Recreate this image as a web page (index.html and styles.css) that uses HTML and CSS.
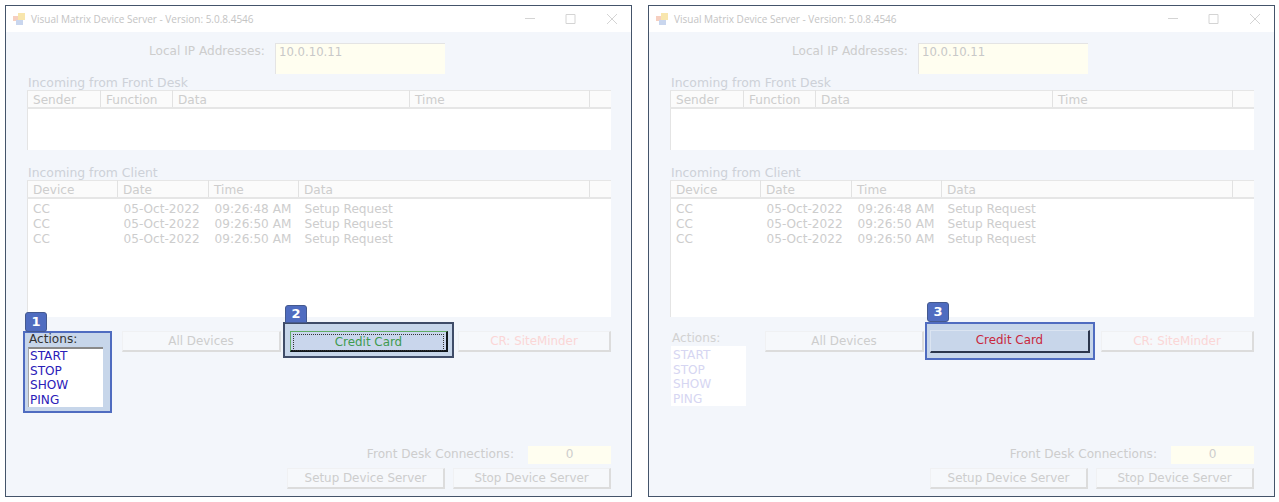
FILE: index.html
```html
<!DOCTYPE html>
<html lang="en">
<head>
    <meta charset="UTF-8">
    <meta name="viewport" content="width=device-width, initial-scale=1.0">
    <title>Visual Matrix Device Server</title>
    <link rel="stylesheet" href="styles.css">
</head>

<body>
    <!-- Window 1: Actions list and the focused Credit Card button -->
    <div class="window">
        <div class="title-bar">
            <svg class="app-icon" width="12" height="12" viewBox="0 0 12 12">
                <rect x="0" y="3" width="5" height="5" fill="#f6cfc0"/>
                <rect x="5" y="0" width="7" height="7" fill="#f8e6ad"/>
                <rect x="3" y="7" width="7" height="5" fill="#c9d6ee"/>
            </svg>
            <span class="title-text">Visual Matrix Device Server - Version: 5.0.8.4546</span>
            <svg class="controls" width="92" height="10" viewBox="0 0 92 10">
                <path d="M0 4.5H10M41 .5H50V9.5H41ZM82 0L92 10M92 0L82 10" fill="none" stroke="#d4d4d4"/>
            </svg>
        </div>
        <div class="main">
            <div class="ip-row">
                <span class="ip-label">Local IP Addresses:</span>
                <div class="ip-box">10.0.10.11</div>
            </div>

            <div class="section-label">Incoming from Front Desk</div>
            <table class="grid grid-desk">
                <colgroup><col class="c73"><col class="c72"><col class="c237"><col class="c180"><col></colgroup>
                <thead><tr><th>Sender</th><th>Function</th><th>Data</th><th>Time</th><th></th></tr></thead>
                <tbody><tr><td colspan="5"></td></tr></tbody>
            </table>

            <div class="section-label section-client">Incoming from Client</div>
            <table class="grid grid-client">
                <colgroup><col class="c90"><col class="c91"><col class="c90"><col class="c291"><col></colgroup>
                <thead><tr><th>Device</th><th>Date</th><th>Time</th><th>Data</th><th></th></tr></thead>
                <tbody>
                    <tr><td>CC</td><td>05-Oct-2022</td><td>09:26:48 AM</td><td>Setup Request</td><td></td></tr>
                    <tr><td>CC</td><td>05-Oct-2022</td><td>09:26:50 AM</td><td>Setup Request</td><td></td></tr>
                    <tr><td>CC</td><td>05-Oct-2022</td><td>09:26:50 AM</td><td>Setup Request</td><td></td></tr>
                    <tr class="filler"><td colspan="5"></td></tr>
                </tbody>
            </table>

            <div class="action-row">
                <div class="actions actions-marked">
                    <span class="mark mark-actions"></span>
                    <span class="badge badge-actions">1</span>
                    <div class="actions-label">Actions:</div>
                    <ul class="actions-list">
                        <li>START</li>
                        <li>STOP</li>
                        <li>SHOW</li>
                        <li>PING</li>
                    </ul>
                </div>
                <button class="btn btn-all">All Devices</button>
                <div class="slot">
                    <span class="mark mark-dark"></span>
                    <span class="badge badge-dark">2</span>
                    <button class="btn btn-credit btn-focus"><span class="focus-rect">Credit Card</span></button>
                </div>
                <button class="btn btn-cr">CR: SiteMinder</button>
            </div>

            <div class="conn-row">
                <span>Front Desk Connections:</span>
                <div class="conn-box">0</div>
            </div>
            <div class="server-row">
                <button class="btn btn-server">Setup Device Server</button>
                <button class="btn btn-server">Stop Device Server</button>
            </div>
        </div>
    </div>

    <!-- Window 2: Credit Card button after the click -->
    <div class="window">
        <div class="title-bar">
            <svg class="app-icon" width="12" height="12" viewBox="0 0 12 12">
                <rect x="0" y="3" width="5" height="5" fill="#f6cfc0"/>
                <rect x="5" y="0" width="7" height="7" fill="#f8e6ad"/>
                <rect x="3" y="7" width="7" height="5" fill="#c9d6ee"/>
            </svg>
            <span class="title-text">Visual Matrix Device Server - Version: 5.0.8.4546</span>
            <svg class="controls" width="92" height="10" viewBox="0 0 92 10">
                <path d="M0 4.5H10M41 .5H50V9.5H41ZM82 0L92 10M92 0L82 10" fill="none" stroke="#d4d4d4"/>
            </svg>
        </div>
        <div class="main">
            <div class="ip-row">
                <span class="ip-label">Local IP Addresses:</span>
                <div class="ip-box">10.0.10.11</div>
            </div>

            <div class="section-label">Incoming from Front Desk</div>
            <table class="grid grid-desk">
                <colgroup><col class="c73"><col class="c72"><col class="c237"><col class="c180"><col></colgroup>
                <thead><tr><th>Sender</th><th>Function</th><th>Data</th><th>Time</th><th></th></tr></thead>
                <tbody><tr><td colspan="5"></td></tr></tbody>
            </table>

            <div class="section-label section-client">Incoming from Client</div>
            <table class="grid grid-client">
                <colgroup><col class="c90"><col class="c91"><col class="c90"><col class="c291"><col></colgroup>
                <thead><tr><th>Device</th><th>Date</th><th>Time</th><th>Data</th><th></th></tr></thead>
                <tbody>
                    <tr><td>CC</td><td>05-Oct-2022</td><td>09:26:48 AM</td><td>Setup Request</td><td></td></tr>
                    <tr><td>CC</td><td>05-Oct-2022</td><td>09:26:50 AM</td><td>Setup Request</td><td></td></tr>
                    <tr><td>CC</td><td>05-Oct-2022</td><td>09:26:50 AM</td><td>Setup Request</td><td></td></tr>
                    <tr class="filler"><td colspan="5"></td></tr>
                </tbody>
            </table>

            <div class="action-row">
                <div class="actions">
                    <div class="actions-label">Actions:</div>
                    <ul class="actions-list">
                        <li>START</li>
                        <li>STOP</li>
                        <li>SHOW</li>
                        <li>PING</li>
                    </ul>
                </div>
                <button class="btn btn-all">All Devices</button>
                <div class="slot">
                    <span class="mark mark-blue"></span>
                    <span class="badge badge-blue">3</span>
                    <button class="btn btn-credit btn-pressed">Credit Card</button>
                </div>
                <button class="btn btn-cr">CR: SiteMinder</button>
            </div>

            <div class="conn-row">
                <span>Front Desk Connections:</span>
                <div class="conn-box">0</div>
            </div>
            <div class="server-row">
                <button class="btn btn-server">Setup Device Server</button>
                <button class="btn btn-server">Stop Device Server</button>
            </div>
        </div>
    </div>
</body>
</html>
```

FILE: styles.css
```css
/*
==========================
= Page: Two window shots =
==========================
*/
body {
    margin: 0;
    padding: 5px;
    display: flex;
    gap: 16px;
    background: #fff;
    font-family: "DejaVu Sans", sans-serif;
    font-size: 12.1px;
    color: #cdcdcd;
}

.window {
    width: 627px;
    height: 492px;
    box-sizing: border-box;
    border: 1px solid #44546a;
    background: #f3f6fb;
}

/*
=============
= Title Bar =
=============
*/
.title-bar {
    height: 26px;
    display: flex;
    align-items: center;
    background: #fff;
    padding-left: 7px;
}

.app-icon {
    margin-right: 6px;
}

.title-text {
    font-family: "Open Sans", sans-serif;
    font-size: 10px;
    color: #c4c4c4;
}

.controls {
    margin-left: auto;
    margin-right: 14px;
}

/*
======================
= Main: Window Body =
======================
*/
.main {
    padding: 11px 20px 0 21px;
}

.ip-row {
    display: flex;
    height: 31px;
    padding-left: 122px;
    line-height: 16px;
}

.ip-label {
    width: 116px;
    white-space: nowrap;
}

.ip-box {
    width: 170px;
    margin-left: 10px;
    padding-left: 3px;
    box-sizing: border-box;
    background: #fffef0;
    border-top: 1px solid #e4e4e4;
    border-left: 1px solid #e4e4e4;
    color: #c8c8c8;
    font-size: 11.7px;
}

.section-label {
    height: 16px;
    padding-left: 1px;
    line-height: 17px;
    font-size: 12.4px;
    color: #cdd1d8;
}

.section-client {
    margin-top: 16px;
    height: 14px;
    line-height: 14px;
}

/*
==================
= Grid: Listview =
==================
*/
.grid {
    width: 584px;
    table-layout: fixed;
    border-collapse: collapse;
    background: #fff;
    border-left: 1px solid #e4e4e4;
}

.c73 { width: 73px; }
.c72 { width: 72px; }
.c237 { width: 237px; }
.c180 { width: 180px; }
.c90 { width: 90px; }
.c91 { width: 91px; }
.c291 { width: 291px; }

.grid th {
    height: 13px;
    padding: 3px 0 0 5px;
    line-height: 13px;
    background: #fbfbfb;
    border-top: 1px solid #e6e6e6;
    border-bottom: 2px solid #e6e6e6;
    border-right: 1px solid #e2e2e2;
    text-align: left;
    font-weight: normal;
    color: #cdcdcd;
}

.grid th:last-child {
    border-right: none;
}

.grid td {
    padding: 0 0 0 6px;
    height: 15px;
    line-height: 15px;
    color: #cdcdcd;
    white-space: nowrap;
}

.grid-desk td {
    height: 41px;
}

.grid-client td:first-child {
    padding-left: 5px;
}

.grid-client tbody tr:first-child td {
    height: 15px;
    padding-top: 3px;
}

.grid-client .filler td {
    height: 70px;
}

/*
==================================
= Action-Row: List and Buttons =
==================================
*/
.action-row {
    display: flex;
    align-items: flex-start;
    height: 115px;
    margin-top: 14px;
    gap: 9px;
}

.actions {
    position: relative;
    width: 75px;
    margin: 1px 10px 0 1px;
}

.actions-label {
    position: relative;
    height: 14px;
    line-height: 13px;
    padding-left: 1px;
    color: #d2d2d2;
}

.actions-list {
    position: relative;
    margin: 0;
    padding: 2px 0 0 2px;
    height: 60px;
    box-sizing: border-box;
    list-style: none;
    background: #fff;
    color: #d6d6f2;
    line-height: 14.6px;
}

.actions-marked .actions-label {
    color: #333;
    line-height: 15px;
    height: 15px;
}

.actions-marked .actions-list {
    padding: 0 0 0 1px;
    border-top: 2px solid #8a8a8a;
    border-left: 1px solid #a8a8a8;
    color: #2a20b8;
}

.slot {
    position: relative;
    width: 158px;
    height: 21px;
}

.btn {
    position: relative;
    height: 21px;
    padding: 0;
    box-sizing: border-box;
    background: #f6f8fb;
    border: 1px solid #f0f1f3;
    border-right: 2px solid #dcdcdc;
    border-bottom: 2px solid #dcdcdc;
    font-family: "DejaVu Sans", sans-serif;
    font-size: 11.9px;
    color: #cdcdcd;
}

.btn-all {
    width: 159px;
}

.btn-cr {
    flex: 1;
    margin-left: 1px;
    color: #fbd6d6;
}

.btn-credit {
    width: 100%;
    height: 100%;
}

.btn-focus {
    padding: 1px;
    background: #c9d6ec;
    border: 1px solid #62ad68;
    border-right: 2px solid #10161c;
    border-bottom: 2px solid #10161c;
    color: #3f9a50;
}

.focus-rect {
    display: block;
    height: 15px;
    line-height: 14px;
    margin: 1px;
    border: 1px dotted #333;
}

.btn-pressed {
    width: 160px;
    height: 23px;
    margin: -1px 0 0 -3px;
    padding-bottom: 2px;
    background: #c8d6ea;
    border: 1px solid #dbe4f1;
    border-right: 2px solid #2b364c;
    border-bottom: 2px solid #2b364c;
    color: #c9283e;
}

/*
=============================
= Marks: Callouts over page =
=============================
*/
.mark {
    position: absolute;
    box-sizing: border-box;
    background: #c7d6ea;
    border: 2px solid #4f6cc0;
}

.mark-actions {
    inset: -1px -9px -6px -5px;
}

.mark-dark {
    inset: -9px -6px -6px -7px;
    border-color: #3f4c68;
}

.mark-blue {
    inset: -9px -4px -8px -8px;
}

.badge {
    position: absolute;
    width: 22px;
    height: 20px;
    box-sizing: border-box;
    background: #4f6cc0;
    border: 1px solid #44598f;
    border-radius: 3px;
    color: #fff;
    font-weight: bold;
    font-size: 13px;
    line-height: 18px;
    text-align: center;
}

.badge-actions {
    left: -3px;
    top: -20px;
}

.badge-dark {
    left: -5px;
    top: -26px;
    height: 18px;
    line-height: 16px;
    border-radius: 3px 3px 0 0;
}

.badge-blue {
    left: -6px;
    top: -29px;
}

/*
==============================
= Bottom: Connections/Server =
==============================
*/
.conn-row {
    display: flex;
    justify-content: flex-end;
    height: 18px;
    line-height: 17px;
}

.conn-box {
    width: 83px;
    margin-left: 14px;
    background: #fffef0;
    text-align: center;
    color: #cdcdcd;
}

.server-row {
    display: flex;
    justify-content: flex-end;
    gap: 8px;
    margin-top: 4px;
}

.btn-server {
    width: 158px;
}
```
